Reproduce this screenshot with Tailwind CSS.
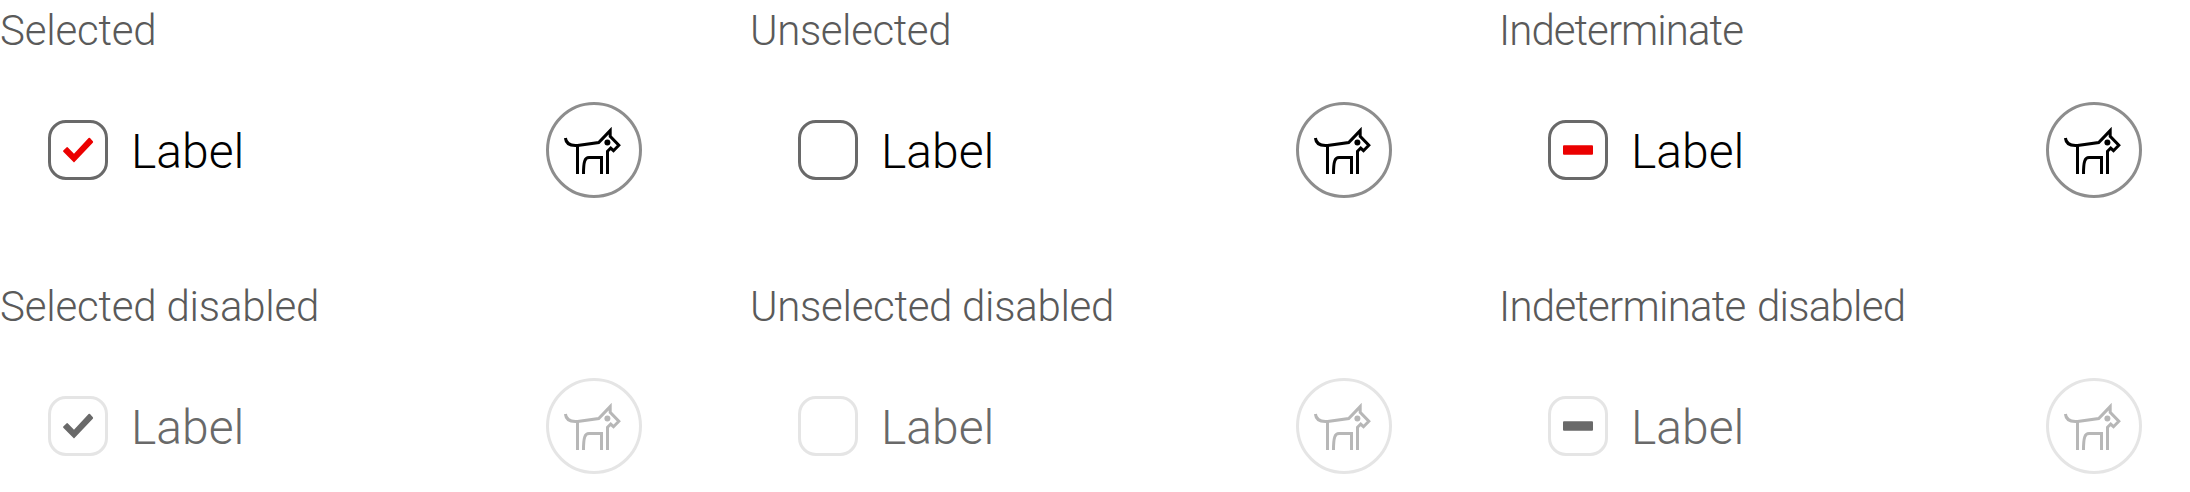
<!DOCTYPE html>
<html lang="en">
<head>
<meta charset="utf-8">
<title>Checkbox states</title>
<script src="https://cdn.jsdelivr.net/npm/@tailwindcss/browser@4"></script>
</head>
<body class="bg-white font-['Roboto','Liberation_Sans',sans-serif] font-light">
<svg class="hidden">
  <symbol id="check" viewBox="0 0 60 60"><path d="M15.3 30.600 18.7 27.2Q19.3 26.800 19.9 27.4L26 33.7 40.6 18.1Q41.3 17.400 42 18.1L44.9 21.2Q45.4 22 44.8 22.8L26 42.4 15.3 31.8Q14.800 31.2 15.3 30.600Z" fill="currentColor"/></symbol>
  <symbol id="minus" viewBox="0 0 60 60"><rect x="15" y="25.2" width="30" height="9.6" rx="1" fill="currentColor"/></symbol>
  <symbol id="dog" viewBox="0 0 96 96">
    <g fill="none" stroke="currentColor" stroke-width="3" stroke-miterlimit="10">
      <path d="M19.4 36C20 41.5 24.500 44 31.500 43.400L52.700 40.600 64.200 28.600V34.400L72.800 43.300 67.500 48.700 64.700 46.100 61.500 49.300V72"/>
      <path d="M31.500 43.400V72M37.500 72C37.500 59.500 38.800 55.600 43 55.600H55.500V72"/>
    </g>
    <circle cx="61.400" cy="40.600" r="3" fill="currentColor"/>
  </symbol>
</svg>
<main class="grid h-[492px] w-[2250px] grid-cols-3 grid-rows-[276px_216px] overflow-hidden">
  <section>
    <h2 class="h-[102px] text-[42px] leading-[62px] tracking-[-0.2px] whitespace-nowrap text-[#5a5a5a]">Selected</h2>
    <div class="flex h-24 items-center pl-12">
      <span class="size-[60px] shrink-0 rounded-[18px] border-3 border-[#696969] text-[#eb0000]"><svg class="-m-[3px] size-[60px]"><use href="#check"/></svg></span>
      <span class="w-[438px] pt-1 pl-[23px] text-[48px] leading-[60px] text-black">Label</span>
      <span class="size-24 shrink-0 rounded-full border-3 border-[#8d8d8d] text-black"><svg class="-m-[3px] size-24"><use href="#dog"/></svg></span>
    </div>
  </section>
  <section>
    <h2 class="h-[102px] text-[42px] leading-[62px] tracking-[-0.4px] whitespace-nowrap text-[#5a5a5a]">Unselected</h2>
    <div class="flex h-24 items-center pl-12">
      <span class="size-[60px] shrink-0 rounded-[18px] border-3 border-[#696969]"></span>
      <span class="w-[438px] pt-1 pl-[23px] text-[48px] leading-[60px] text-black">Label</span>
      <span class="size-24 shrink-0 rounded-full border-3 border-[#8d8d8d] text-black"><svg class="-m-[3px] size-24"><use href="#dog"/></svg></span>
    </div>
  </section>
  <section>
    <h2 class="-ml-px h-[102px] text-[42px] leading-[62px] tracking-[-0.95px] whitespace-nowrap text-[#5a5a5a]">Indeterminate</h2>
    <div class="flex h-24 items-center pl-12">
      <span class="size-[60px] shrink-0 rounded-[18px] border-3 border-[#696969] text-[#eb0000]"><svg class="-m-[3px] size-[60px]"><use href="#minus"/></svg></span>
      <span class="w-[438px] pt-1 pl-[23px] text-[48px] leading-[60px] text-black">Label</span>
      <span class="size-24 shrink-0 rounded-full border-3 border-[#8d8d8d] text-black"><svg class="-m-[3px] size-24"><use href="#dog"/></svg></span>
    </div>
  </section>
  <section>
    <h2 class="h-[102px] text-[42px] leading-[62px] tracking-[-0.2px] whitespace-nowrap text-[#5a5a5a]">Selected disabled</h2>
    <div class="flex h-24 items-center pl-12">
      <span class="size-[60px] shrink-0 rounded-[18px] border-3 border-[#e5e5e5] text-[#696969]"><svg class="-m-[3px] size-[60px]"><use href="#check"/></svg></span>
      <span class="w-[438px] pt-1 pl-[23px] text-[48px] leading-[60px] text-[#696969]">Label</span>
      <span class="size-24 shrink-0 rounded-full border-3 border-[#e5e5e5] text-[#b7b7b7]"><svg class="-m-[3px] size-24"><use href="#dog"/></svg></span>
    </div>
  </section>
  <section>
    <h2 class="h-[102px] text-[42px] leading-[62px] tracking-[-0.3px] word-spacing-[1px] whitespace-nowrap text-[#5a5a5a]">Unselected disabled</h2>
    <div class="flex h-24 items-center pl-12">
      <span class="size-[60px] shrink-0 rounded-[18px] border-3 border-[#e5e5e5]"></span>
      <span class="w-[438px] pt-1 pl-[23px] text-[48px] leading-[60px] text-[#696969]">Label</span>
      <span class="size-24 shrink-0 rounded-full border-3 border-[#e5e5e5] text-[#b7b7b7]"><svg class="-m-[3px] size-24"><use href="#dog"/></svg></span>
    </div>
  </section>
  <section>
    <h2 class="-ml-px h-[102px] text-[42px] leading-[62px] tracking-[-0.75px] [word-spacing:2px] whitespace-nowrap text-[#5a5a5a]">Indeterminate disabled</h2>
    <div class="flex h-24 items-center pl-12">
      <span class="size-[60px] shrink-0 rounded-[18px] border-3 border-[#e5e5e5] text-[#696969]"><svg class="-m-[3px] size-[60px]"><use href="#minus"/></svg></span>
      <span class="w-[438px] pt-1 pl-[23px] text-[48px] leading-[60px] text-[#696969]">Label</span>
      <span class="size-24 shrink-0 rounded-full border-3 border-[#e5e5e5] text-[#b7b7b7]"><svg class="-m-[3px] size-24"><use href="#dog"/></svg></span>
    </div>
  </section>
</main>
</body>
</html>
